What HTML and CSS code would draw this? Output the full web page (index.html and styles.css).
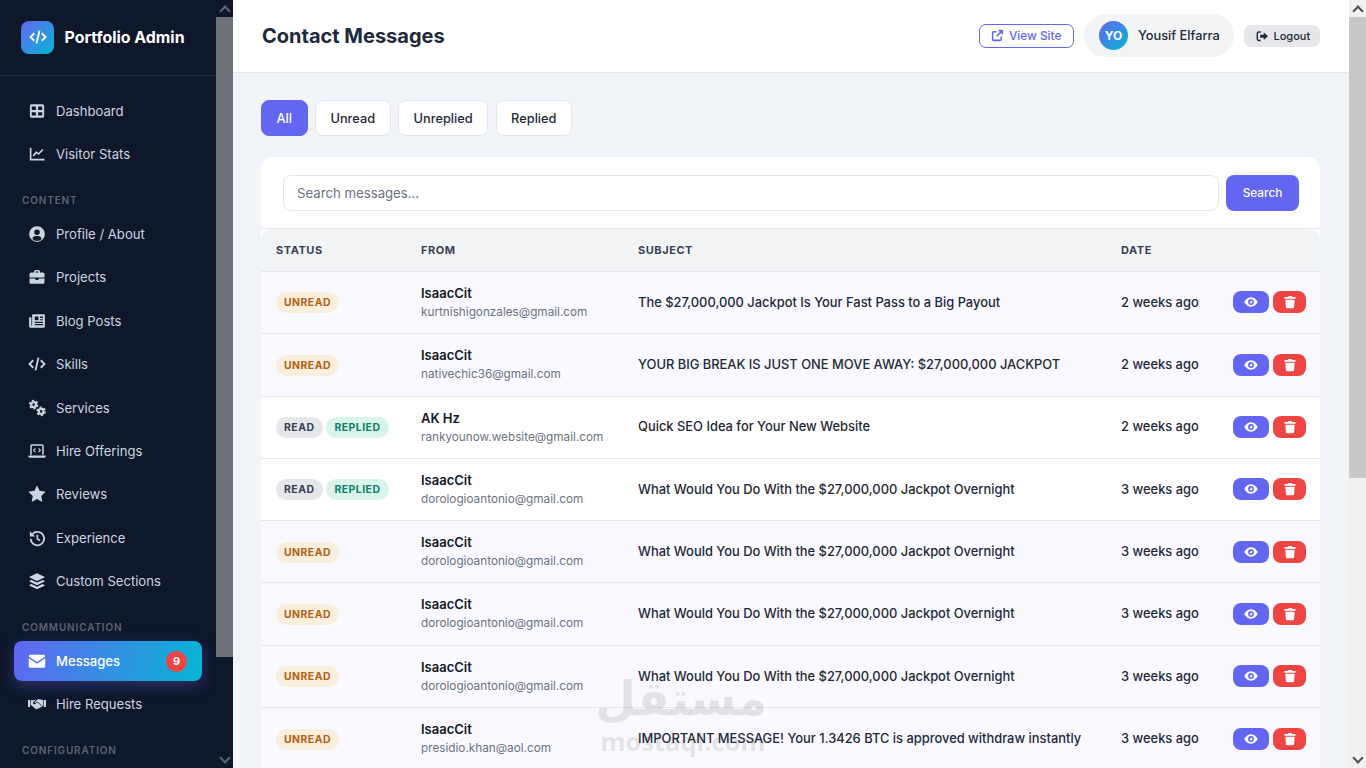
FILE: index.html
```html
<!DOCTYPE html>
<html lang="en">
<head>
  <meta charset="UTF-8" />
  <meta name="viewport" content="width=device-width, initial-scale=1.0"/>
  <title>Contact Messages</title>
  <link rel="stylesheet" href="styles.css">
</head>
<body>
  <svg class="sprite" width="0" height="0">
    <symbol id="i-grid" viewBox="0 0 24 24"><path fill-rule="evenodd" d="M5 3h14a2.500 2.500 0 0 1 2.500 2.500v13A2.500 2.500 0 0 1 19 21H5a2.500 2.500 0 0 1-2.500-2.500v-13A2.500 2.500 0 0 1 5 3zm0 3v4.500h5.500V6zm8.500 0v4.500H19V6zM5 13.500V18h5.500v-4.500zm8.500 0V18H19v-4.500z"/></symbol>
    <symbol id="i-chart" viewBox="0 0 24 24"><path d="M3.500 3.500v16h18.500" fill="none" stroke="currentColor" stroke-width="2.200"/><path d="M7 14.500l4-5 3 2.500 6-6" fill="none" stroke="currentColor" stroke-width="2.200"/></symbol>
    <symbol id="i-user" viewBox="0 0 24 24"><path fill-rule="evenodd" d="M12 1.500a10.500 10.500 0 1 1 0 21 10.500 10.500 0 0 1 0-21zm0 4.500a3.700 3.700 0 1 0 0 7.400A3.700 3.700 0 0 0 12 6zm-6.200 12.500a8.500 8.500 0 0 0 12.400 0c-.6-2.400-2.400-3.800-4.200-3.800h-4c-1.800 0-3.600 1.400-4.200 3.800z"/></symbol>
    <symbol id="i-case" viewBox="0 0 24 24"><path fill-rule="evenodd" d="M8 6V4.500A2 2 0 0 1 10 2.500h4a2 2 0 0 1 2 2V6h4a2 2 0 0 1 2 2v4.500H2V8a2 2 0 0 1 2-2zm2-1.500V6h4V4.500z"/><path d="M2 14h8v2h4v-2h8v5a2 2 0 0 1-2 2H4a2 2 0 0 1-2-2z"/></symbol>
    <symbol id="i-news" viewBox="0 0 24 24"><path fill-rule="evenodd" d="M7 3h14a1.500 1.500 0 0 1 1.500 1.500v15A2 2 0 0 1 20.500 21H4a2.500 2.500 0 0 1-2.500-2.500V7h3v11a.8.8 0 0 0 1 0V4.500A1.500 1.500 0 0 1 7 3zm2 3v5h5V6zm7 0v2h4V6zm0 3.500v1.500h4V9.500zM9 13v1.500h11V13zm0 3v1.500h11V16z"/></symbol>
    <symbol id="i-code" viewBox="0 0 24 24"><path d="M7 7l-5 5 5 5M17 7l5 5-5 5M14 3.500l-4 17" fill="none" stroke="currentColor" stroke-width="2.500"/></symbol>
    <symbol id="i-gears" viewBox="0 0 24 24"><g fill="none" stroke="currentColor"><circle cx="7.500" cy="7.500" r="3.200" stroke-width="3"/><circle cx="7.500" cy="7.500" r="5.400" stroke-width="2" stroke-dasharray="3 2.650"/><circle cx="17.500" cy="16.500" r="3.200" stroke-width="3"/><circle cx="17.500" cy="16.500" r="5.400" stroke-width="2" stroke-dasharray="3 2.650"/></g></symbol>
    <symbol id="i-laptop" viewBox="0 0 24 24"><path fill-rule="evenodd" d="M5 3h14a2 2 0 0 1 2 2v12h-2V5H5v12H3V5a2 2 0 0 1 2-2z"/><path d="M.5 18h23v1a2 2 0 0 1-2 2h-19a2 2 0 0 1-2-2z"/><path d="M10 8.500l-2.500 2.500 2.500 2.500M14 8.500l2.500 2.500-2.500 2.500" fill="none" stroke="currentColor" stroke-width="1.500"/></symbol>
    <symbol id="i-star" viewBox="0 0 24 24"><path d="M12 .5l3.500 7.300 8 1.100-5.800 5.600 1.400 8L12 18.700l-7.100 3.800 1.400-8L.5 8.900l8-1.100z"/></symbol>
    <symbol id="i-history" viewBox="0 0 24 24"><path d="M6 6.500A9 9 0 1 1 3.500 13" fill="none" stroke="currentColor" stroke-width="2.400"/><path d="M2.500 3v7h7z"/><path d="M12.500 7.500V13l3.500 2.500" fill="none" stroke="currentColor" stroke-width="2.200"/></symbol>
    <symbol id="i-layers" viewBox="0 0 24 24"><path d="M12 1.500l10 4.700v1.100L12 12 2 7.300V6.200z"/><path d="M4.500 10.500L12 14l7.500-3.500 2.500 1.200v1.100L12 17.500 2 12.800v-1.100z"/><path d="M4.500 16L12 19.500l7.500-3.500 2.500 1.200v1.100L12 23 2 18.300v-1.100z"/></symbol>
    <symbol id="i-mail" viewBox="0 0 24 24"><path d="M3 3.500h18A2 2 0 0 1 23 5.500v.6L12 13.200 1 6.100v-.6a2 2 0 0 1 2-2z"/><path d="M1 8.400l11 7.200 11-7.200V19a2 2 0 0 1-2 2H3a2 2 0 0 1-2-2z"/></symbol>
    <symbol id="i-hands" viewBox="0 0 24 24"><path d="M0 6.500h2.800V16H0zM21.200 6.500H24V16h-2.800z"/><path d="M3.600 7h3.600L11 5.500 7 9.500a1.700 1.700 0 0 0 2.400 2.400l3-2.300 6.300 5.700-1.300 1.500-1.200-.8-.3 1.500-1.600-.4-.6 1.500-1.600-.6-1.200 1.300-6.400-5.800H3.600z"/><path d="M13 5.500h3l4.400 1.500v8h-1.100l-6.700-6.200-2.800 2c-.9-.2-1.200-1-.7-1.500z"/></symbol>
    <symbol id="i-link" viewBox="0 0 24 24"><path d="M10 5H5a2 2 0 0 0-2 2v12a2 2 0 0 0 2 2h12a2 2 0 0 0 2-2v-5M14 3h7v7M21 3L10.500 13.500" fill="none" stroke="currentColor" stroke-width="2.800"/></symbol>
    <symbol id="i-logout" viewBox="0 0 24 24"><path d="M9 4H5a2.500 2.500 0 0 0-2.500 2.500v11A2.500 2.500 0 0 0 5 20h4" fill="none" stroke="currentColor" stroke-width="2.800"/><path d="M15 5l8 7-8 7v-4H8V9h7z"/></symbol>
    <symbol id="i-eye" viewBox="0 0 24 24"><path fill-rule="evenodd" d="M12 4c6 0 10 5 11.500 8C22 15 18 20 12 20S2 15 .5 12C2 9 6 4 12 4zm0 3a5 5 0 1 0 0 10 5 5 0 0 0 0-10zm0 2.500a2.500 2.500 0 1 1-2.500 2.500c.8.400 2.500-.7 2.500-2.500z"/></symbol>
    <symbol id="i-trash" viewBox="0 0 24 24"><path d="M9 1.500h6l1 2h5.500V6.500h-19V3.500H8z"/><path d="M4 8h16l-1 13a2 2 0 0 1-2 1.800H7A2 2 0 0 1 5 21z"/></symbol>
  </svg>

  <aside class="sidebar">
    <div class="side-inner">
      <div class="brand">
        <span class="brand-logo"><svg class="ic"><use href="#i-code"/></svg></span>
        <span class="brand-name">Portfolio Admin</span>
      </div>
      <nav class="side-nav">
        <a class="nav-item"><svg class="ic"><use href="#i-grid"/></svg>Dashboard</a>
        <a class="nav-item"><svg class="ic"><use href="#i-chart"/></svg>Visitor Stats</a>
        <div class="nav-label">Content</div>
        <a class="nav-item"><svg class="ic"><use href="#i-user"/></svg>Profile / About</a>
        <a class="nav-item"><svg class="ic"><use href="#i-case"/></svg>Projects</a>
        <a class="nav-item"><svg class="ic"><use href="#i-news"/></svg>Blog Posts</a>
        <a class="nav-item"><svg class="ic"><use href="#i-code"/></svg>Skills</a>
        <a class="nav-item"><svg class="ic"><use href="#i-gears"/></svg>Services</a>
        <a class="nav-item"><svg class="ic"><use href="#i-laptop"/></svg>Hire Offerings</a>
        <a class="nav-item"><svg class="ic"><use href="#i-star"/></svg>Reviews</a>
        <a class="nav-item"><svg class="ic"><use href="#i-history"/></svg>Experience</a>
        <a class="nav-item"><svg class="ic"><use href="#i-layers"/></svg>Custom Sections</a>
        <div class="nav-label">Communication</div>
        <a class="nav-item active"><svg class="ic"><use href="#i-mail"/></svg>Messages<span class="nav-count">9</span></a>
        <a class="nav-item"><svg class="ic"><use href="#i-hands"/></svg>Hire Requests</a>
        <div class="nav-label">Configuration</div>
      </nav>
    </div>
    <div class="scrollbar dark">
      <span class="arrow up"></span>
      <span class="thumb" style="height:640px"></span>
      <span class="arrow down"></span>
    </div>
  </aside>

  <div class="main">
    <header class="topbar">
      <h1>Contact Messages</h1>
      <div class="top-actions">
        <a class="btn-site"><svg class="ic"><use href="#i-link"/></svg>View Site</a>
        <div class="user-pill"><span class="avatar">YO</span>Yousif Elfarra</div>
        <a class="btn-logout"><svg class="ic"><use href="#i-logout"/></svg>Logout</a>
      </div>
    </header>

    <main class="content">
      <div class="tabs">
        <a class="tab current">All</a>
        <a class="tab">Unread</a>
        <a class="tab">Unreplied</a>
        <a class="tab">Replied</a>
      </div>

      <section class="card">
        <form class="search">
          <input type="text" placeholder="Search messages...">
          <button type="button">Search</button>
        </form>
        <table class="messages">
          <colgroup>
            <col class="c-status"><col class="c-from"><col class="c-subject"><col class="c-date"><col class="c-actions">
          </colgroup>
          <thead>
            <tr><th>Status</th><th>From</th><th>Subject</th><th>Date</th><th></th></tr>
          </thead>
          <tbody>
            <tr class="unread">
              <td><span class="badge b-unread">Unread</span></td>
              <td><div class="from-name">IsaacCit</div><div class="from-mail">kurtnishigonzales@gmail.com</div></td>
              <td>The $27,000,000 Jackpot Is Your Fast Pass to a Big Payout</td>
              <td>2 weeks ago</td>
              <td><div class="acts"><a class="act view"><svg class="ic"><use href="#i-eye"/></svg></a><a class="act del"><svg class="ic"><use href="#i-trash"/></svg></a></div></td>
            </tr>
            <tr class="unread">
              <td><span class="badge b-unread">Unread</span></td>
              <td><div class="from-name">IsaacCit</div><div class="from-mail">nativechic36@gmail.com</div></td>
              <td>YOUR BIG BREAK IS JUST ONE MOVE AWAY: $27,000,000 JACKPOT</td>
              <td>2 weeks ago</td>
              <td><div class="acts"><a class="act view"><svg class="ic"><use href="#i-eye"/></svg></a><a class="act del"><svg class="ic"><use href="#i-trash"/></svg></a></div></td>
            </tr>
            <tr>
              <td><span class="badge b-read">Read</span><span class="badge b-replied">Replied</span></td>
              <td><div class="from-name">AK Hz</div><div class="from-mail">rankyounow.website@gmail.com</div></td>
              <td>Quick SEO Idea for Your New Website</td>
              <td>2 weeks ago</td>
              <td><div class="acts"><a class="act view"><svg class="ic"><use href="#i-eye"/></svg></a><a class="act del"><svg class="ic"><use href="#i-trash"/></svg></a></div></td>
            </tr>
            <tr>
              <td><span class="badge b-read">Read</span><span class="badge b-replied">Replied</span></td>
              <td><div class="from-name">IsaacCit</div><div class="from-mail">dorologioantonio@gmail.com</div></td>
              <td>What Would You Do With the $27,000,000 Jackpot Overnight</td>
              <td>3 weeks ago</td>
              <td><div class="acts"><a class="act view"><svg class="ic"><use href="#i-eye"/></svg></a><a class="act del"><svg class="ic"><use href="#i-trash"/></svg></a></div></td>
            </tr>
            <tr class="unread">
              <td><span class="badge b-unread">Unread</span></td>
              <td><div class="from-name">IsaacCit</div><div class="from-mail">dorologioantonio@gmail.com</div></td>
              <td>What Would You Do With the $27,000,000 Jackpot Overnight</td>
              <td>3 weeks ago</td>
              <td><div class="acts"><a class="act view"><svg class="ic"><use href="#i-eye"/></svg></a><a class="act del"><svg class="ic"><use href="#i-trash"/></svg></a></div></td>
            </tr>
            <tr class="unread">
              <td><span class="badge b-unread">Unread</span></td>
              <td><div class="from-name">IsaacCit</div><div class="from-mail">dorologioantonio@gmail.com</div></td>
              <td>What Would You Do With the $27,000,000 Jackpot Overnight</td>
              <td>3 weeks ago</td>
              <td><div class="acts"><a class="act view"><svg class="ic"><use href="#i-eye"/></svg></a><a class="act del"><svg class="ic"><use href="#i-trash"/></svg></a></div></td>
            </tr>
            <tr class="unread">
              <td><span class="badge b-unread">Unread</span></td>
              <td><div class="from-name">IsaacCit</div><div class="from-mail">dorologioantonio@gmail.com</div></td>
              <td>What Would You Do With the $27,000,000 Jackpot Overnight</td>
              <td>3 weeks ago</td>
              <td><div class="acts"><a class="act view"><svg class="ic"><use href="#i-eye"/></svg></a><a class="act del"><svg class="ic"><use href="#i-trash"/></svg></a></div></td>
            </tr>
            <tr class="unread">
              <td><span class="badge b-unread">Unread</span></td>
              <td><div class="from-name">IsaacCit</div><div class="from-mail">presidio.khan@aol.com</div></td>
              <td>IMPORTANT MESSAGE! Your 1.3426 BTC is approved withdraw instantly</td>
              <td>3 weeks ago</td>
              <td><div class="acts"><a class="act view"><svg class="ic"><use href="#i-eye"/></svg></a><a class="act del"><svg class="ic"><use href="#i-trash"/></svg></a></div></td>
            </tr>
          </tbody>
        </table>
      </section>
    </main>

    <div class="watermark">
      <div class="wm-ar" lang="ar" dir="rtl">مستقل</div>
      <div class="wm-en">mostaql.com</div>
    </div>
  </div>

  <div class="scrollbar light">
    <span class="arrow up"></span>
    <span class="thumb" style="height:461px"></span>
    <span class="arrow down"></span>
  </div>
</body>
</html>
```

FILE: styles.css
```css
* { margin: 0; padding: 0; box-sizing: border-box; }
html, body { height: 100%; }
body { display: flex; height: 100vh; overflow: hidden; font-family: Inter, 'Noto Sans', sans-serif; background: #f1f4f9; color: #1f2937; font-size: 13.1px; }
a { text-decoration: none; color: inherit; }
.sprite { position: absolute; }
.ic { width: 18px; height: 18px; fill: currentColor; flex-shrink: 0; }

/* sidebar */
.sidebar { width: 233px; flex-shrink: 0; display: flex; background: #0f172a; overflow: hidden; }
.side-inner { flex: 1; min-width: 0; }
.brand { height: 76px; display: flex; align-items: center; gap: 10.5px; padding: 0 21px 1px; border-bottom: 1px solid #262f42; }
.brand-logo { width: 33px; height: 33px; border-radius: 8px; background: linear-gradient(135deg, #6366f1, #06b6d4); color: #fff; display: flex; align-items: center; justify-content: center; }
.brand-name { color: #fff; font-size: 15.9px; font-weight: 700; }
.side-nav { padding: 14.6px 14px 0; }
.nav-item { height: 40px; margin-bottom: 3.4px; padding: 0 15px 0 14px; display: flex; align-items: center; gap: 10px; color: #cbd5e1; border-radius: 8px; }
.nav-item.active { color: #fff; font-weight: 500; background: linear-gradient(110deg, #6366f1, #06b6d4); box-shadow: 0 4px 15px rgba(99, 102, 241, 0.35); }
.nav-count { margin-left: auto; width: 21px; height: 21px; border-radius: 50%; background: #ef4444; color: #fff; font-size: 11px; font-weight: 700; display: flex; align-items: center; justify-content: center; }
.nav-label { height: 36.6px; padding: 16.4px 8px 0; color: #5b6474; font-size: 10px; font-weight: 600; letter-spacing: .85px; text-transform: uppercase; }

/* scrollbars */
.scrollbar { width: 17px; flex-shrink: 0; height: 100vh; display: flex; flex-direction: column; position: relative; }
.scrollbar .arrow { height: 17px; flex-shrink: 0; display: flex; align-items: center; justify-content: center; }
.scrollbar .arrow::after { content: ""; width: 6px; height: 6px; border-left: 2px solid; border-top: 2px solid; }
.scrollbar .arrow.up::after { transform: translateY(2px) rotate(45deg); }
.scrollbar .arrow.down { position: absolute; left: 0; right: 0; bottom: 0; }
.scrollbar .arrow.down::after { transform: translateY(-2px) rotate(225deg); }
.scrollbar.dark { background: #0f172a; color: #5d6472; }
.scrollbar.dark .thumb { background: #6f7179; }
.scrollbar.light { background: #f1f1f1; color: #505050; }
.scrollbar.light .thumb { background: #c8c8c8; }

/* main */
.main { flex: 1; min-width: 0; position: relative; overflow: hidden; }
.topbar { height: 73px; background: #fff; border-bottom: 1px solid #e5e7eb; display: flex; align-items: center; justify-content: space-between; padding: 0 29px 1px; }
.topbar h1 { font-size: 20px; font-weight: 700; color: #1e293b; }
.top-actions { display: flex; align-items: center; gap: 10px; }
.btn-site { height: 24px; width: 95px; padding: 0 0 0 11px; display: flex; align-items: center; gap: 5px; border: 1.5px solid #6366f1; border-radius: 7px; color: #6366f1; font-size: 11.8px; font-weight: 500; }
.btn-site .ic { width: 13px; height: 13px; }
.user-pill { height: 43px; width: 150px; padding: 0 0 0 15px; display: flex; align-items: center; gap: 10px; background: #f3f4f6; border-radius: 22px; font-size: 12.8px; font-weight: 500; color: #1f2937; }
.avatar { width: 29px; height: 29px; border-radius: 50%; background: linear-gradient(135deg, #6366f1, #06b6d4); color: #fff; font-size: 12px; font-weight: 700; display: flex; align-items: center; justify-content: center; }
.btn-logout { height: 22px; width: 76px; padding: 1px 0 0 12px; display: flex; align-items: center; gap: 5px; background: #e5e7eb; border-radius: 7px; font-size: 11px; font-weight: 500; color: #1f2937; }
.btn-logout .ic { width: 12.5px; height: 12.5px; }

.content { padding: 27px 29px 0 28px; }
.tabs { display: flex; gap: 7.4px; margin-bottom: 21px; }
.tab { height: 36px; padding: 0 14.5px; display: flex; align-items: center; background: #fff; border: 1px solid #e5e7eb; border-radius: 8px; font-size: 12.8px; font-weight: 500; color: #1f2937; }
.tab.current { background: #6366f1; border-color: #6366f1; color: #fff; }

.card { background: #fff; border-radius: 12px 12px 0 0; }
.search { display: flex; gap: 7px; padding: 18px 21px 17px 22px; border-bottom: 1px solid #e5e7eb; }
.search input { flex: 1; height: 36px; padding: 0 13px; border: 1px solid #e5e7eb; border-radius: 8px; font: inherit; font-size: 13.2px; outline: none; background: #fff; }
.search input::placeholder { color: #6b7280; }
.search button { width: 73px; height: 36px; border: none; border-radius: 8px; background: #6366f1; color: #fff; font: inherit; font-size: 11.8px; font-weight: 500; }

.messages { width: 100%; border-collapse: separate; border-spacing: 0; table-layout: fixed; }
.c-status { width: 145px; }
.c-from { width: 217px; }
.c-subject { width: 483px; }
.c-date { width: 112px; }
.messages th { height: 43px; padding: 0 15px; background: #f3f4f6; border-bottom: 1px solid #e5e7eb; font-size: 11px; font-weight: 700; letter-spacing: .55px; text-transform: uppercase; text-align: left; color: #374151; }
.messages th:last-child { border-top-right-radius: 12px; }
.messages th:first-child { border-top-left-radius: 12px; }
.messages td { height: 62.3px; padding: 0 15px 1px; border-bottom: 1px solid #e5e7eb; color: #1f2937; white-space: nowrap; font-weight: 500; font-size: 12.9px; }
.messages td:nth-child(1) { padding: .6px 15px 0; }
.messages td:nth-child(2) { padding-bottom: .4px; }
.messages td:nth-child(3), .messages td:nth-child(4) { padding-bottom: .7px; }
.messages td:nth-child(5) { padding-bottom: .4px; }
.messages tr.unread td { background: #f9f9ff; }
.from-name { font-size: 13px; font-weight: 600; color: #111827; line-height: 18px; }
.from-mail { font-size: 11.75px; font-weight: 400; color: #6b7280; line-height: 18px; margin-top: 1px; }
.badge { display: inline-block; height: 21px; line-height: 21px; padding: 0 8.5px 0 8px; border-radius: 11px; font-size: 10.4px; font-weight: 700; letter-spacing: .5px; text-transform: uppercase; }
.badge + .badge { margin-left: 3px; }
.b-unread { background: #faeedd; color: #b45f14; }
.b-read { background: #e5e7eb; color: #374151; }
.b-replied { padding: 0 8.5px; background: #d9f4ea; color: #0f8069; }
.acts { display: flex; gap: 4px; }
.act { height: 22px; flex-shrink: 0; display: flex; align-items: center; justify-content: center; border-radius: 8px; color: #fff; }
.act .ic { width: 14px; height: 14px; }
.act.view { width: 36px; background: #6366f1; }
.act.del { width: 33px; background: #ef4444; }

/* freelance site mark over the table */
.watermark { position: absolute; left: 366px; top: 672px; width: 168px; text-align: center; color: rgba(60, 60, 60, 0.13); pointer-events: none; }
.wm-ar { font-family: 'DejaVu Sans', sans-serif; font-size: 47px; font-weight: 700; line-height: 54px; }
.wm-en { font-family: 'Open Sans', sans-serif; font-size: 25.5px; font-weight: 700; line-height: 30px; }
```
